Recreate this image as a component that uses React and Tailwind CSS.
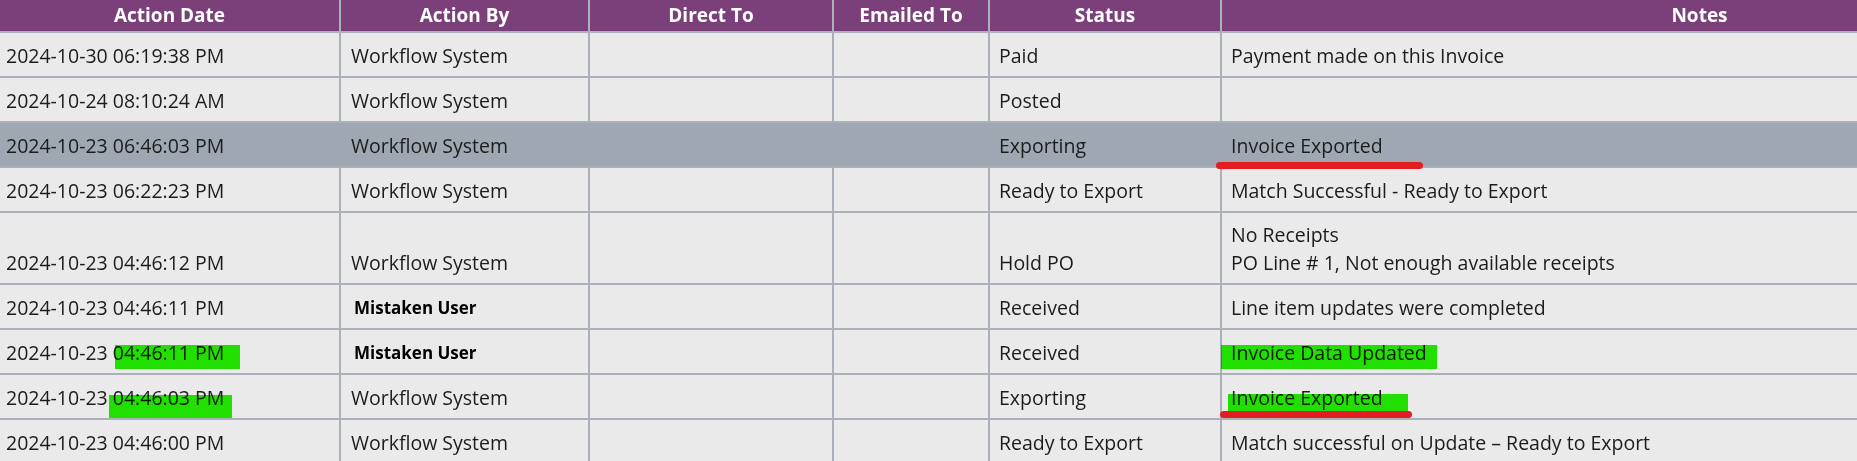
import React from "react";

const rows = [
  { date: "2024-10-30 06:19:38 PM", by: "Workflow System", status: "Paid", notes: ["Payment made on this Invoice"] },
  { date: "2024-10-24 08:10:24 AM", by: "Workflow System", status: "Posted", notes: [] },
  { date: "2024-10-23 06:46:03 PM", by: "Workflow System", status: "Exporting", notes: ["Invoice Exported"], hl: true },
  { date: "2024-10-23 06:22:23 PM", by: "Workflow System", status: "Ready to Export", notes: ["Match Successful - Ready to Export"] },
  { date: "2024-10-23 04:46:12 PM", by: "Workflow System", status: "Hold PO", notes: ["No Receipts", "PO Line # 1, Not enough available receipts"], tall: true },
  { date: "2024-10-23 04:46:11 PM", by: "Mistaken User", bold: true, status: "Received", notes: ["Line item updates were completed"] },
  { date: "2024-10-23 04:46:11 PM", by: "Mistaken User", bold: true, status: "Received", notes: ["Invoice Data Updated"] },
  { date: "2024-10-23 04:46:03 PM", by: "Workflow System", status: "Exporting", notes: ["Invoice Exported"] },
  { date: "2024-10-23 04:46:00 PM", by: "Workflow System", status: "Ready to Export", notes: ["Match successful on Update \u2013 Ready to Export"] },
];

const headers = ["Action Date", "Action By", "Direct To", "Emailed To", "Status"];
const grid = "grid grid-cols-[341px_249px_244px_156px_232px_1fr]";

function Row({ r }) {
  const bg = r.hl ? "bg-[#9ea7b2]" : "bg-[#eaeaea]";
  const cellBorder = r.hl ? "border-r-2 border-[#9ea7b2]" : "border-r-2 border-[#aab1bb]";
  const h = r.tall ? "h-[72px]" : "h-[45px]";
  const cell = "flex items-end pb-[6px] leading-[28px] whitespace-nowrap " + cellBorder;
  return (
    <div className={`${grid} ${h} ${bg} border-b-2 border-[#aab1bb]`}>
      <div className={`${cell} pl-[6px]`}>{r.date}</div>
      <div className={`${cell} pl-[10px]`}>
        {r.bold ? (
          <span className="pl-[3px] text-[17px] font-bold text-black">{r.by}</span>
        ) : (
          r.by
        )}
      </div>
      <div className={cell}></div>
      <div className={cell}></div>
      <div className={`${cell} pl-[9px]`}>{r.status}</div>
      <div className="flex flex-col justify-end pb-[6px] leading-[28px] pl-[9px] whitespace-nowrap">
        {r.notes.map((n, i) => (
          <div key={i}>{n}</div>
        ))}
      </div>
    </div>
  );
}

export default function App() {
  return (
    <div className="relative h-[461px] w-full overflow-hidden bg-[#eaeaea] font-['Open_Sans',sans-serif] text-[19.5px] text-[#1c1c1c]">
      <div className={`${grid} h-[33px] bg-[#7b4079] border-b-2 border-[#aab1bb]`}>
        {headers.map((hd) => (
          <div
            key={hd}
            className="flex items-center justify-center text-[19px] font-bold text-white leading-none border-r-2 border-[#aab1bb]"
          >
            {hd}
          </div>
        ))}
        <div className="flex items-center justify-center pl-[320px] text-[19px] font-bold text-white leading-none">
          Notes
        </div>
      </div>
      {rows.map((r, i) => (
        <Row key={i} r={r} />
      ))}

      {/* green highlighter marks */}
      <div className="pointer-events-none absolute left-[115px] top-[345px] h-[24px] w-[125px] bg-[#24f500] mix-blend-multiply" />
      <div className="pointer-events-none absolute left-[109px] top-[395px] h-[23px] w-[123px] bg-[#24f500] mix-blend-multiply" />
      <div className="pointer-events-none absolute left-[1221px] top-[345px] h-[24px] w-[216px] bg-[#24f500] mix-blend-multiply" />
      <div className="pointer-events-none absolute left-[1228px] top-[394px] h-[18px] w-[180px] bg-[#24f500] mix-blend-multiply" />

      {/* red underline marks */}
      <div className="pointer-events-none absolute left-[1216px] top-[162px] h-[7px] w-[207px] rounded-full bg-[#e41d22]" />
      <div className="pointer-events-none absolute left-[1220px] top-[411px] h-[7px] w-[192px] rounded-full bg-[#e41d22]" />
    </div>
  );
}
